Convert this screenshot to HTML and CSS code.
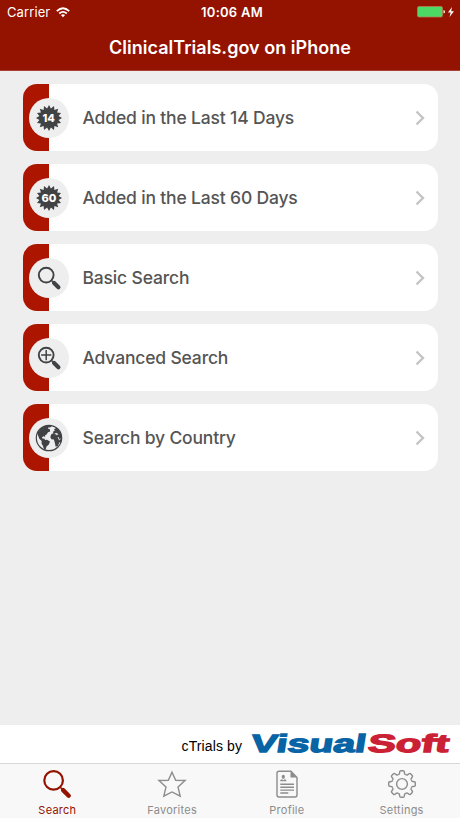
FILE: index.html
```html
<!DOCTYPE html>
<html lang="en">
<head>
  <meta charset="UTF-8">
  <meta name="viewport" content="width=device-width, initial-scale=1.0">
  <title>ClinicalTrials.gov on iPhone</title>
  <link rel="stylesheet" href="styles.css">
</head>
<body>
  <!-- Shared shapes -->
  <svg class="defs" width="0" height="0">
    <defs>
      <path id="burst" d="M0-13 1.9-9.6 5-12 5.4-8.1 9.2-9.2 8.1-5.4 12-5 9.6-1.9 13 0 9.6 1.9 12 5 8.1 5.4 9.2 9.2 5.4 8.1 5 12 1.9 9.6 0 13-1.9 9.6-5 12-5.4 8.1-9.2 9.2-8.1 5.4-12 5-9.6 1.9-13 0-9.6-1.9-12-5-8.1-5.4-9.2-9.2-5.4-8.1-5-12-1.9-9.6z"/>
      <g id="lens" fill="none" stroke="currentColor">
        <circle cx="-2.8" cy="-2.9" r="7.4" stroke-width="1.9"/>
        <path d="M2.7 2.7 5 5" stroke-width="1.5"/>
        <path d="M5.1 5.1 9.4 9.2" stroke-width="4.2" stroke-linecap="round"/>
      </g>
      <path id="tooth" d="M-3.9-9.5Q-2.7-9.4-2.5-10.7L-2.3-12.2Q-2.1-13.3-1.2-13.3H1.2Q2.1-13.3 2.3-12.2L2.5-10.7Q2.7-9.4 3.9-9.5"/>
    </defs>
  </svg>

  <header class="header">
    <div class="status">
      <div class="carrier">
        <span>Carrier</span>
        <svg width="14" height="11" viewBox="0 0 14 11" fill="none" stroke="#fff" stroke-width="1.8">
          <path d="M.8 4.1Q7-1.6 13.2 4.1M3.2 6.5Q7 3.2 10.8 6.5"/>
          <path d="M4.9 8Q7 6.3 9.1 8L7 10.2z" fill="#fff" stroke="none"/>
        </svg>
      </div>
      <div class="time">10:06 AM</div>
      <div class="power">
        <svg width="38" height="12" viewBox="0 0 38 12">
          <rect x=".5" y=".5" width="25" height="10.5" rx="1.5" fill="#4cd964" stroke="#b77b55" stroke-width=".8"/>
          <path d="M26.5 4Q28 4.3 28 5.8T26.5 7.6z" fill="#fff"/>
          <path d="M35 1 31 6.6H33.7L32.5 11 37 5.2H34.2z" fill="#fff"/>
        </svg>
      </div>
    </div>
    <h1 class="title">ClinicalTrials.gov on iPhone</h1>
  </header>

  <main class="menu">
    <a class="card">
      <span class="badge">
        <svg width="40" height="40" viewBox="-20 -20 40 40"><use href="#burst"/><text class="badge-number" x="-.3" y="4">14</text></svg>
      </span>
      <span class="label">Added in the Last 14 Days</span>
      <svg class="chevron" width="10" height="16" viewBox="0 0 10 16"><path d="M1.5 1.5 8 8 1.5 14.5"/></svg>
    </a>
    <a class="card">
      <span class="badge">
        <svg width="40" height="40" viewBox="-20 -20 40 40"><use href="#burst"/><text class="badge-number" x="0" y="4">60</text></svg>
      </span>
      <span class="label">Added in the Last 60 Days</span>
      <svg class="chevron" width="10" height="16" viewBox="0 0 10 16"><path d="M1.5 1.5 8 8 1.5 14.5"/></svg>
    </a>
    <a class="card">
      <span class="badge">
        <svg width="40" height="40" viewBox="-20 -20 40 40"><use href="#lens"/></svg>
      </span>
      <span class="label">Basic Search</span>
      <svg class="chevron" width="10" height="16" viewBox="0 0 10 16"><path d="M1.5 1.5 8 8 1.5 14.5"/></svg>
    </a>
    <a class="card">
      <span class="badge">
        <svg width="40" height="40" viewBox="-20 -20 40 40"><use href="#lens"/><path d="M-2.8-8V2.2M-7.9-2.9H2.3" stroke="currentColor" stroke-width="1.5"/></svg>
      </span>
      <span class="label">Advanced Search</span>
      <svg class="chevron" width="10" height="16" viewBox="0 0 10 16"><path d="M1.5 1.5 8 8 1.5 14.5"/></svg>
    </a>
    <a class="card">
      <span class="badge">
        <svg width="40" height="40" viewBox="-20 -20 40 40">
          <circle r="12.7" fill="none" stroke="currentColor" stroke-width="1.2"/>
          <path d="M-7.5-10.6-3-12.6.5-12.5 2.8-11.5 1-10.4-.4-10.8-1.1-9.5.8-8.8 1.2-6.5-1-5.7-2.2-3.7-4-2.5-3.8-.9-5.4-1.8-7-.8-6.4.7-4.6.6-4 2-2 1.8 1 3.5-.2 6.6-2.5 8.4-3.4 11.8-5 11.5-6 8-7.5 5.5-7.3 3-9.7.8-11-2.8-11.4-5.4-9.6-7.8z"/>
          <path d="M5-8.8 7.5-10.2 10-7.7 11.9-4.6 12.7-.8 12 4.2 10.3 4.6 8.9 8 6.7 8.7 5.6 4.1 4.9 1.6 2.4 1.3 1.3-1.1 2.3-3.7 4.4-4.7 3.9-6.2 5.8-7.3z"/>
          <path d="M5.7-4.2 8-4.7 8.8-3.5 6.8-3.3M9-1 10.3 1.9 11.5 1" fill="none" stroke="#eee" stroke-width=".9"/>
        </svg>
      </span>
      <span class="label">Search by Country</span>
      <svg class="chevron" width="10" height="16" viewBox="0 0 10 16"><path d="M1.5 1.5 8 8 1.5 14.5"/></svg>
    </a>
  </main>

  <div class="sponsor">
    <span class="sponsor-text">cTrials by</span>
    <svg class="logo" width="200" height="24" viewBox="0 0 200 24">
      <g transform="translate(0 20.3) skewX(-9)">
        <text class="logo-visual" x="-1" y="0" textLength="115" lengthAdjust="spacingAndGlyphs">Visual</text>
        <text class="logo-soft" x="116" y="0" textLength="81" lengthAdjust="spacingAndGlyphs">Soft</text>
      </g>
    </svg>
  </div>

  <nav class="tabs">
    <a class="tab active">
      <svg width="30" height="30" viewBox="-15 -15 30 30">
        <g fill="none" stroke="currentColor">
          <circle cx="-3.4" cy="-3.6" r="9.3" stroke-width="2.2"/>
          <path d="M3.3 3.3 6 6" stroke-width="1.5"/>
          <path d="M6.1 6.1 11.7 11.7" stroke-width="4.4" stroke-linecap="round"/>
        </g>
      </svg>
      <span>Search</span>
    </a>
    <a class="tab">
      <svg width="30" height="30" viewBox="-15 -15 30 30">
        <path d="M0-11.8 3.7-3.7 13.1-3.5 6 2.9 8.2 12.2 0 8-8.2 12.2-6 2.9-13.1-3.5-3.7-3.7z" fill="none" stroke="currentColor" stroke-width="1.4"/>
      </svg>
      <span>Favorites</span>
    </a>
    <a class="tab">
      <svg width="30" height="30" viewBox="-15 -15 30 30">
        <g fill="none" stroke="currentColor" stroke-width="1.4">
          <path d="M-8-12.8H4L10-6.5V11Q10 13 8 13H-8Q-10 13-10 11V-10.8Q-10-12.8-8-12.8z"/>
          <path d="M-6.7.2H7M-6.7 3.3H7M-6.7 6.1H7M-6.7 9H1.3"/>
        </g>
        <path d="M3.5-12.8V-6.4H10z" fill="currentColor"/>
        <ellipse cx="-3.7" cy="-7.2" rx="1.6" ry="2.1" fill="currentColor"/>
        <path d="M-7-2.7Q-6.8-4.5-4.8-4.7L-3.7-3.5-2.6-4.7Q-.6-4.5-.4-2.7z" fill="currentColor"/>
      </svg>
      <span>Profile</span>
    </a>
    <a class="tab">
      <svg width="30" height="30" viewBox="-15 -15 30 30">
        <g fill="none" stroke="currentColor" stroke-width="1.4">
          <use href="#tooth"/>
          <use href="#tooth" transform="rotate(45)"/>
          <use href="#tooth" transform="rotate(90)"/>
          <use href="#tooth" transform="rotate(135)"/>
          <use href="#tooth" transform="rotate(180)"/>
          <use href="#tooth" transform="rotate(225)"/>
          <use href="#tooth" transform="rotate(270)"/>
          <use href="#tooth" transform="rotate(315)"/>
          <circle r="5.4"/>
        </g>
      </svg>
      <span>Settings</span>
    </a>
  </nav>
</body>
</html>
```

FILE: styles.css
```css
* {
  box-sizing: border-box;
}

body {
  margin: 0;
  height: 818px;
  display: flex;
  flex-direction: column;
  background: #eee;
  font-family: Inter, "Liberation Sans", sans-serif;
  overflow: hidden;
}

svg {
  display: block;
  flex-shrink: 0;
}

.defs {
  position: absolute;
}

/* Status bar and title */
.header {
  height: 71px;
  background: #931200;
  border-bottom: 1px solid #a84234;
  color: #fff;
}

.status {
  height: 24px;
  padding: 0 5px 0 7px;
  display: grid;
  grid-template-columns: 1fr auto 1fr;
  align-items: center;
  font-size: 13px;
  line-height: 24px;
}

.carrier {
  display: flex;
  align-items: center;
  gap: 6px;
  letter-spacing: 0.1px;
}

.time {
  padding-left: 2px;
  font-weight: 600;
  letter-spacing: 0.25px;
}

.power {
  display: flex;
  justify-content: flex-end;
}

.title {
  margin: 0;
  font-size: 18px;
  font-weight: 600;
  line-height: 47px;
  text-align: center;
  letter-spacing: 0.03px;
}

/* Menu cards */
.menu {
  flex: 1;
  display: flex;
  flex-direction: column;
  gap: 13px;
  padding: 13.4px 22.5px 0;
}

.card {
  height: 67px;
  display: flex;
  align-items: center;
  padding: 0 13px 0 6.5px;
  border-radius: 14px;
  background: linear-gradient(to right, #ac1600 26.5px, #fff 26.5px);
}

.badge {
  width: 40px;
  height: 40px;
  border-radius: 50%;
  background: #eee;
  color: #404244;
  fill: currentColor;
}

.badge-number {
  fill: #fff;
  font-size: 11px;
  font-weight: 800;
  text-anchor: middle;
}

.label {
  flex: 1;
  margin-left: 13.5px;
  color: #555;
  font-size: 17.5px;
  font-weight: 500;
  white-space: nowrap;
  letter-spacing: -0.17px;
}

.chevron {
  fill: none;
  stroke: #c4c4c6;
  stroke-width: 2.4;
}

/* Sponsor strip */
.sponsor {
  height: 38px;
  display: flex;
  align-items: center;
  justify-content: flex-end;
  gap: 9px;
  padding-right: 9px;
  background: #fff;
}

.sponsor-text {
  padding-top: 4px;
  color: #000;
  font-family: "Liberation Sans", Arial, sans-serif;
  font-size: 14px;
  letter-spacing: 0.1px;
}

.logo {
  overflow: visible;
  font-family: "Liberation Sans", Arial, sans-serif;
  font-size: 25px;
  font-weight: 700;
  stroke-width: 1.3;
}

.logo-visual {
  fill: #0864a5;
  stroke: #0864a5;
}

.logo-soft {
  fill: #cb2135;
  stroke: #cb2135;
}

/* Tab bar */
.tabs {
  height: 55px;
  display: grid;
  grid-template-columns: repeat(4, 1fr);
  padding-right: 1px;
  background: #f8f8f8;
  border-top: 1px solid #d8d8d8;
}

.tab {
  display: flex;
  flex-direction: column;
  align-items: center;
  gap: 4px;
  padding-top: 5px;
  color: #8c8c8c;
  font-size: 11px;
  font-weight: 400;
  line-height: 14px;
  letter-spacing: 0.25px;
}

.active {
  color: #931200;
}
```
